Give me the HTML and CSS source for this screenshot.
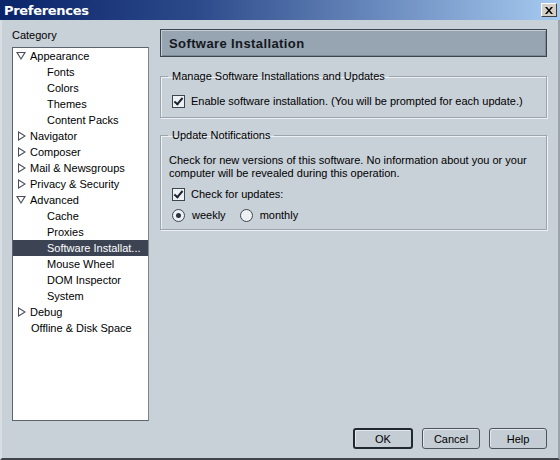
FILE: index.html
```html
<!DOCTYPE html>
<html>
<head>
<meta charset="utf-8">
<link rel="stylesheet" href="styles.css">
</head>
<body>
<div class="window">
  <div class="titlebar">
    <span class="title">Preferences</span>
    <span class="close"><svg width="8" height="7" viewBox="0 0 8 7"><path d="M0 0h2l2 2.5L6 0h2L5 3.5 8 7H6L4 4.5 2 7H0l3-3.5z" fill="#000"/></svg></span>
  </div>
  <div class="body">
    <div class="side">
      <div class="cat-label">Category</div>
      <div class="tree">
        <div class="row top"><span class="tw tw-d"></span>Appearance</div>
        <div class="row child">Fonts</div>
        <div class="row child">Colors</div>
        <div class="row child">Themes</div>
        <div class="row child">Content Packs</div>
        <div class="row top"><span class="tw tw-r"></span>Navigator</div>
        <div class="row top"><span class="tw tw-r"></span>Composer</div>
        <div class="row top"><span class="tw tw-r"></span>Mail &amp; Newsgroups</div>
        <div class="row top"><span class="tw tw-r"></span>Privacy &amp; Security</div>
        <div class="row top"><span class="tw tw-d"></span>Advanced</div>
        <div class="row child">Cache</div>
        <div class="row child">Proxies</div>
        <div class="row child selected">Software Installat...</div>
        <div class="row child">Mouse Wheel</div>
        <div class="row child">DOM Inspector</div>
        <div class="row child">System</div>
        <div class="row top"><span class="tw tw-r"></span>Debug</div>
        <div class="row plain">Offline &amp; Disk Space</div>
      </div>
    </div>
    <div class="main">
      <div class="header">Software Installation</div>
      <fieldset class="group g1">
        <legend>Manage Software Installations and Updates</legend>
        <div class="inner">
          <label class="check"><span class="box checked"></span>Enable software installation. (You will be prompted for each update.)</label>
        </div>
      </fieldset>
      <fieldset class="group g2">
        <legend>Update Notifications</legend>
        <div class="inner">
          <p class="desc">Check for new versions of this software. No information about you or your computer will be revealed during this operation.</p>
          <label class="check"><span class="box checked"></span>Check for updates:</label>
          <div class="radios">
            <label class="radio"><span class="dot on"></span>weekly</label>
            <label class="radio"><span class="dot"></span>monthly</label>
          </div>
        </div>
      </fieldset>
    </div>
  </div>
  <div class="footer">
    <button class="btn default">OK</button>
    <button class="btn">Cancel</button>
    <button class="btn">Help</button>
  </div>
</div>
</body>
</html>
```
FILE: styles.css
```css
* { box-sizing: border-box; }
html, body { margin: 0; padding: 0; }
body {
  font-family: "Liberation Sans", Arial, sans-serif;
  font-size: 11px;
  color: #000;
  background: #c8d0d8;
}
.window {
  width: 560px;
  height: 460px;
  background: #c8d0d8;
  border-left: 2px solid #d8dee4;
  border-right: 2px solid #9aa2aa;
  border-bottom: 2px solid #404448;
  display: flex;
  flex-direction: column;
}
.titlebar {
  height: 20px;
  margin-left: -2px;
  margin-right: -2px;
  background: linear-gradient(to right, #0a246a 0%, #2c4a8a 35%, #a6caf0 100%);
  display: flex;
  align-items: center;
  justify-content: space-between;
  padding: 0 3px 0 4px;
}
.title {
  color: #fff;
  font-weight: bold;
  font-size: 13px;
  font-family: "DejaVu Sans", sans-serif;
  letter-spacing: -0.3px;
}
.close {
  width: 16px;
  height: 14px;
  background: #d4d0c8;
  border: 1px solid;
  border-color: #fff #404040 #404040 #fff;
  display: flex;
  align-items: center;
  justify-content: center;
}
.body {
  flex: 1;
  display: flex;
  gap: 11px;
  padding: 8px 11px 0 10px;
}
.side {
  width: 137px;
  display: flex;
  flex-direction: column;
}
.cat-label {
  height: 13px;
  line-height: 13px;
  margin-top: 1px;
  margin-bottom: 5px;
}
.tree {
  height: 374px;
  background: #fff;
  border: 1px solid #5c6470;
  border-right-color: #7c848c;
}
.row {
  height: 16px;
  line-height: 16px;
  white-space: nowrap;
  display: flex;
  align-items: center;
}
.row.top { padding-left: 3px; }
.row.child { padding-left: 34px; }
.row.plain { padding-left: 18px; }
.row.selected {
  background: #3c4454;
  color: #fff;
}
.tw {
  width: 14px;
  height: 16px;
  display: inline-block;
  position: relative;
  flex: none;
}
.tw-d::before {
  content: "";
  position: absolute;
  left: 0;
  top: 4px;
  border-left: 5px solid transparent;
  border-right: 5px solid transparent;
  border-top: 8px solid #4a4f58;
}
.tw-d::after {
  content: "";
  position: absolute;
  left: 2px;
  top: 5px;
  border-left: 3px solid transparent;
  border-right: 3px solid transparent;
  border-top: 5px solid #fff;
}
.tw-r::before {
  content: "";
  position: absolute;
  left: 2px;
  top: 3px;
  border-top: 5px solid transparent;
  border-bottom: 5px solid transparent;
  border-left: 8px solid #4a4f58;
}
.tw-r::after {
  content: "";
  position: absolute;
  left: 3px;
  top: 5px;
  border-top: 3px solid transparent;
  border-bottom: 3px solid transparent;
  border-left: 5px solid #fff;
}
.main {
  flex: 1;
  display: flex;
  flex-direction: column;
}
.header {
  height: 28px;
  margin-top: 1px;
  background: #97a5b2;
  border: 1px solid #3c4450;
  box-shadow: inset 1px 1px 0 #c4ccd4, inset -1px -1px 0 #7c8894;
  font-family: "Liberation Sans", Arial, sans-serif;
  font-weight: bold;
  font-size: 13px;
  letter-spacing: 0.4px;
  color: #141820;
  padding-left: 8px;
  display: flex;
  align-items: center;
}
.group {
  margin: 0;
  padding: 0;
  border: 1px solid #9ca4ac;
  box-shadow: 1px 1px 0 #eef1f4, inset 1px 1px 0 #eef1f4;
  min-width: 0;
}
.group legend {
  margin-left: 7px;
  padding: 0 4px;
  line-height: 13px;
}
.g1 {
  margin-top: 13px;
  height: 48px;
}
.g1 .inner { padding: 10px 0 0 11px; }
.g2 {
  margin-top: 11px;
  height: 101px;
}
.g2 .inner { padding: 12px 0 0 8px; }
.check {
  display: flex;
  align-items: center;
  height: 16px;
}
.g2 .check { margin-left: 3px; margin-top: 6px; }
.box {
  width: 13px;
  height: 13px;
  border: 1px solid #3c4450;
  background: #eef1f4;
  margin-right: 6px;
  position: relative;
  flex: none;
}
.box.checked::after {
  content: "";
  position: absolute;
  left: 3px;
  top: 0;
  width: 3px;
  height: 7px;
  border-right: 2px solid #1c2430;
  border-bottom: 2px solid #1c2430;
  transform: rotate(40deg);
}
.desc {
  margin: 0;
  line-height: 13px;
  width: 370px;
}
.radios {
  display: flex;
  margin-left: 3px;
  margin-top: 5px;
  gap: 14px;
}
.radio {
  display: flex;
  align-items: center;
  height: 16px;
}
.dot {
  width: 13px;
  height: 13px;
  border-radius: 50%;
  border: 1px solid #3c4450;
  background: #eef1f4;
  margin-right: 7px;
  position: relative;
  flex: none;
}
.dot.on::after {
  content: "";
  position: absolute;
  left: 3px;
  top: 3px;
  width: 5px;
  height: 5px;
  border-radius: 50%;
  background: #2c3440;
}
.footer {
  height: 37px;
  display: flex;
  justify-content: flex-end;
  gap: 9px;
  padding: 7px 11px 0 0;
}
.btn {
  width: 58px;
  height: 21px;
  font-family: "Liberation Sans", Arial, sans-serif;
  font-size: 11px;
  color: #000;
  background: #c4ccd4;
  border: 1px solid #4c5460;
  border-radius: 3px;
  box-shadow: inset 1px 1px 0 #e4e8ec;
  padding: 0;
}
.btn.default {
  border: 2px solid #202830;
  width: 60px;
}
```
